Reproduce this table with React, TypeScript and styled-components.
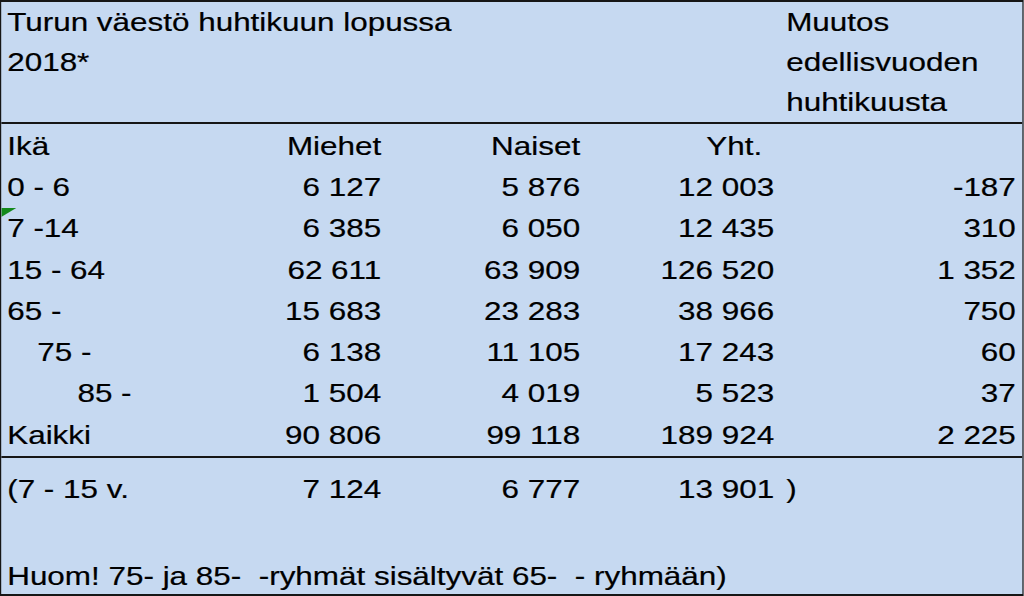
import React from "react";
import styled, { createGlobalStyle } from "styled-components";

const Global = createGlobalStyle`
  html, body { margin: 0; padding: 0; background: #ffffff; overflow: hidden; }
  #root { width: 1024px; height: 596px; }
`;

const COLS = "154.2px 166.7px 165.8px 161.7px 1fr";

const Frame = styled.div`
  width: 853.333px;
  height: 596px;
  box-sizing: border-box;
  transform: scaleX(1.2);
  transform-origin: 0 0;
  border-style: solid;
  border-color: #161616;
  border-width: 2px 1.67px;
  background: #c6d9f1;
  color: #000;
  font-family: "Liberation Sans", Arial, sans-serif;
  font-size: 26.2px;
  -webkit-text-stroke: 0.2px #000;
  display: flex;
  flex-direction: column;
  overflow: hidden;
`;

const Header = styled.div`
  display: grid;
  grid-template-columns: ${COLS};
  grid-template-rows: repeat(3, 40px);
  border-bottom: 2px solid #161616;
`;

const Body = styled.div`
  display: grid;
  grid-template-columns: ${COLS};
  grid-auto-rows: 41.3px;
  padding-top: 1.5px;
  border-bottom: 2px solid #161616;
`;

const Footer = styled.div`
  flex: 1;
  display: grid;
  grid-template-columns: ${COLS};
  grid-template-rows: 46px 1fr;
  padding-bottom: 3.5px;
`;

type CellProps = {
  $right?: boolean;
  $indent?: number;
  $span?: string;
  $col?: number;
  $flag?: boolean;
  $bottom?: boolean;
  $gap?: number;
};

const Cell = styled.div<CellProps>`
  position: relative;
  white-space: pre;
  overflow: visible;
  display: flex;
  align-items: ${(p) => (p.$bottom ? "flex-end" : "center")};
  justify-content: ${(p) => (p.$right ? "flex-end" : "flex-start")};
  line-height: 29px;
  padding-left: ${(p) => (p.$right ? 0 : 5 + (p.$indent ?? 0))}px;
  padding-right: ${(p) => (p.$right ? 4.2 + (p.$gap ?? 0) : 0)}px;
  ${(p) => (p.$span ? `grid-column: ${p.$span};` : "")}
  ${(p) => (p.$col ? `grid-column: ${p.$col};` : "")}
  ${(p) =>
    p.$flag
      ? `&::before {
          content: "";
          position: absolute;
          top: 0;
          left: 0;
          width: 12.5px;
          height: 9px;
          background: #13891b;
          clip-path: polygon(0 0, 100% 0, 0 100%);
        }`
      : ""}
`;

const EdgeCell = styled(Cell)`
  padding-left: ${(p) => (p.$right ? 0 : 5.8)}px;
  padding-right: ${(p) => (p.$right ? 5.8 : 0)}px;
`;

type Row = { label: string; indent?: number; flag?: boolean; m: string; n: string; y: string; c: string };

const rows: Row[] = [
  { label: "0 - 6", m: "6 127", n: "5 876", y: "12 003", c: "-187" },
  { label: "7 -14", flag: true, m: "6 385", n: "6 050", y: "12 435", c: "310" },
  { label: "15 - 64", m: "62 611", n: "63 909", y: "126 520", c: "1 352" },
  { label: "65 -", m: "15 683", n: "23 283", y: "38 966", c: "750" },
  { label: "75 -", indent: 25, m: "6 138", n: "11 105", y: "17 243", c: "60" },
  { label: "85 -", indent: 58.5, m: "1 504", n: "4 019", y: "5 523", c: "37" },
  { label: "Kaikki", m: "90 806", n: "99 118", y: "189 924", c: "2 225" },
];

export default function App() {
  return (
    <>
      <Global />
      <Frame>
        <Header>
          <Cell $span="1 / 5">Turun väestö huhtikuun lopussa</Cell>
          <EdgeCell $col={5}>Muutos</EdgeCell>
          <Cell $span="1 / 5">2018*</Cell>
          <EdgeCell $col={5}>edellisvuoden</EdgeCell>
          <Cell $span="1 / 5" />
          <EdgeCell $col={5}>huhtikuusta</EdgeCell>
        </Header>
        <Body>
          <Cell>Ikä</Cell>
          <Cell $right>Miehet</Cell>
          <Cell $right>Naiset</Cell>
          <Cell $right $gap={10}>Yht.</Cell>
          <EdgeCell $right />
          {rows.map((r) => (
            <React.Fragment key={r.label}>
              <Cell $indent={r.indent} $flag={r.flag}>{r.label}</Cell>
              <Cell $right>{r.m}</Cell>
              <Cell $right>{r.n}</Cell>
              <Cell $right>{r.y}</Cell>
              <EdgeCell $right>{r.c}</EdgeCell>
            </React.Fragment>
          ))}
        </Body>
        <Footer>
          <Cell $bottom>(7 - 15 v.</Cell>
          <Cell $bottom $right>7 124</Cell>
          <Cell $bottom $right>6 777</Cell>
          <Cell $bottom $right>13 901</Cell>
          <EdgeCell $bottom>)</EdgeCell>
          <Cell $bottom $span="1 / 6">Huom! 75- ja 85-  -ryhmät sisältyvät 65-  - ryhmään)</Cell>
        </Footer>
      </Frame>
    </>
  );
}
